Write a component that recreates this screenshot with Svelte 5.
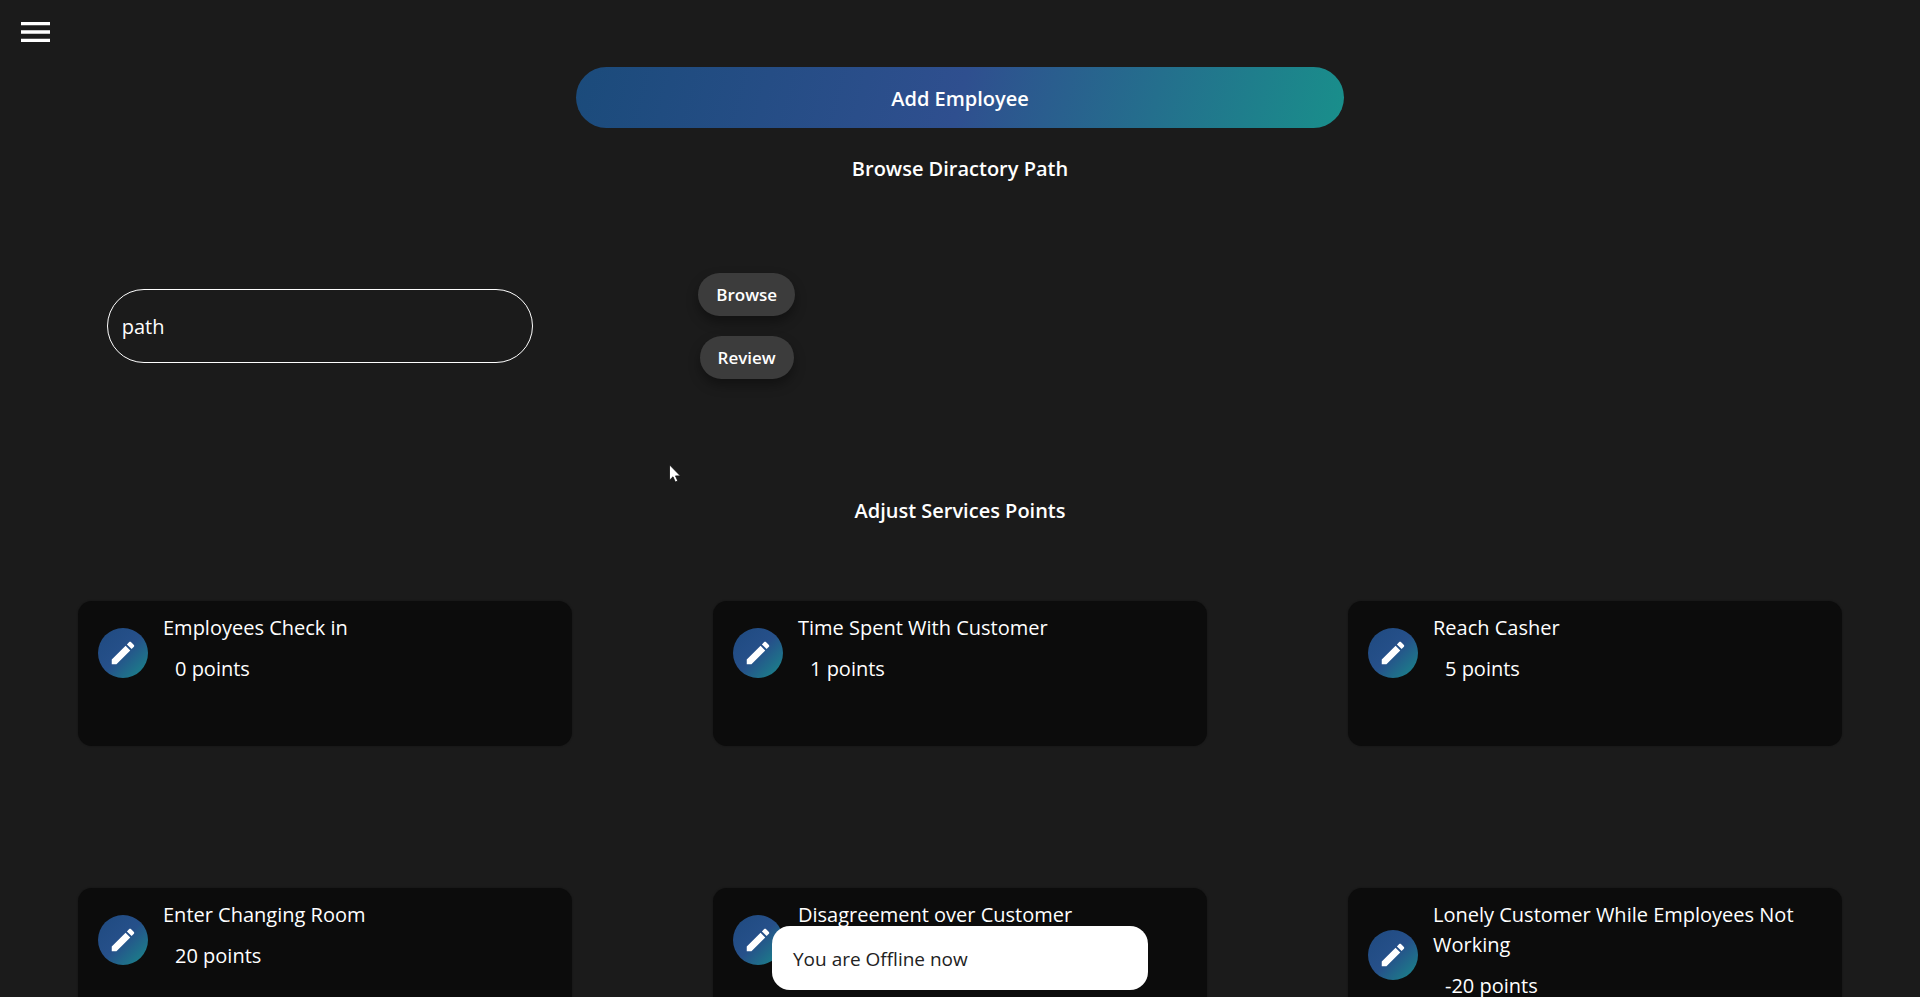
<script>
  const services = [
    { name: 'Employees Check in', points: 0 },
    { name: 'Time Spent With Customer', points: 1 },
    { name: 'Reach Casher', points: 5 },
    { name: 'Enter Changing Room', points: 20 },
    { name: 'Disagreement over Customer', points: null },
    { name: 'Lonely Customer While Employees Not Working', points: -20 },
  ];
  let path = $state('path');
</script>

<div class="page">
  <header>
    <button class="menu" aria-label="Open menu">
      <svg viewBox="0 0 24 24" aria-hidden="true"><path d="M3 18h17.4v-2H3v2zm0-5h17.4v-2H3v2zm0-7v2h17.4V6H3z" /></svg>
    </button>
  </header>

  <main>
    <button class="add">Add Employee</button>

    <h2>Browse Diractory Path</h2>
    <section class="browse">
      <div class="field">
        <input type="text" aria-label="Directory path" bind:value={path} />
      </div>
      <div class="actions">
        <button class="pill">Browse</button>
        <button class="pill">Review</button>
      </div>
    </section>

    <h2 class="adjust">Adjust Services Points</h2>
    <ul class="cards">
      {#each services as service}
        <li class="card">
          <div class="row">
            <button class="edit" aria-label="Edit {service.name}">
              <svg viewBox="0 0 24 24" aria-hidden="true"><path d="M3 17.25V21h3.75L17.81 9.94l-3.75-3.75L3 17.25zM20.71 7.04c.39-.39.39-1.02 0-1.41l-2.34-2.34c-.39-.39-1.02-.39-1.41 0l-1.83 1.83 3.75 3.75 1.83-1.83z" /></svg>
            </button>
            <div class="text">
              <h3>{service.name}</h3>
              <p>{#if service.points !== null}{service.points} points{/if}</p>
            </div>
          </div>
        </li>
      {/each}
    </ul>
  </main>

  <div class="toast" role="status">You are Offline now</div>

  <svg class="cursor" viewBox="0 0 12 19" aria-hidden="true">
    <path d="M.5.8v15.4l3.5-3.4 2.3 5.3 2.5-1.1-2.3-5.1h4.9z" fill="#fff" stroke="#111" stroke-width=".8" />
  </svg>
</div>

<style>
  :global(body) {
    background: #1b1b1b;
  }
  .page {
    height: 100vh;
    overflow: hidden auto;
    scrollbar-width: none;
    background: #1b1b1b;
    color: #fff;
    font: 400 20px/30px 'Open Sans', 'Noto Sans', sans-serif;
  }
  button,
  input {
    font: inherit;
    color: inherit;
    border: 0;
    padding: 0;
    margin: 0;
    background: none;
  }
  button {
    cursor: pointer;
  }
  header {
    display: flex;
    padding: 12px 16px 15px;
  }
  .menu {
    width: 40px;
    height: 40px;
  }
  svg {
    display: block;
    fill: #fff;
  }
  main {
    display: flex;
    flex-direction: column;
    align-items: center;
  }
  .add {
    width: 40%;
    height: 61px;
    padding-top: 2px;
    border-radius: 31px;
    background: linear-gradient(105deg, #1b4b7b, #2f4f8f 50%, #198f8b);
    font-weight: 600;
  }
  h2 {
    margin: 26px 0 0;
    font-size: 20px;
    font-weight: 600;
  }
  .browse {
    display: grid;
    grid-template-columns: 3fr 1fr 5fr;
    align-items: center;
    width: 100%;
    margin-top: 89px;
  }
  .field {
    display: flex;
    justify-content: center;
  }
  input {
    box-sizing: border-box;
    width: calc(100% * 2 / 3);
    height: 74px;
    padding: 0 14px;
    border: 1px solid #fff;
    border-radius: 37px;
  }
  .actions {
    display: flex;
    flex-direction: column;
    align-items: center;
    gap: 20px;
  }
  .pill {
    height: 43px;
    padding: 1px 18px 0;
    border-radius: 22px;
    background: #3c3c3c;
    box-shadow: 0 6px 12px rgba(0, 0, 0, 0.35);
    font-size: 17px;
    font-weight: 600;
  }
  .adjust {
    margin-top: 117px;
  }
  .cards {
    display: grid;
    grid-template-columns: repeat(3, 1fr);
    gap: 142px 141px;
    box-sizing: border-box;
    width: 100%;
    margin: 75px 0 0;
    padding: 0 78px 142px;
    list-style: none;
  }
  .card {
    box-sizing: border-box;
    min-height: 145px;
    padding: 12px 20px 10px;
    border-radius: 14px;
    background: #0c0c0c;
    box-shadow: 0 0 2px rgba(0, 0, 0, 0.4);
  }
  .row {
    display: flex;
    align-items: center;
    gap: 15px;
  }
  .edit {
    display: grid;
    place-items: center;
    flex: none;
    width: 50px;
    height: 50px;
    border-radius: 50%;
    background: linear-gradient(135deg, #1f4a80, #26508a 50%, #198a8a);
  }
  .edit svg {
    width: 30px;
    height: 30px;
  }
  .text {
    padding-bottom: 8px;
  }
  h3,
  p {
    margin: 0;
    font-size: 20px;
    font-weight: 400;
  }
  p {
    min-height: 30px;
    margin-top: 11px;
    padding-left: 12px;
  }
  .toast {
    position: fixed;
    left: 50%;
    bottom: 7px;
    transform: translateX(-50%);
    box-sizing: border-box;
    width: 376px;
    padding: 18px 21px 16px;
    border-radius: 18px;
    background: #fff;
    color: #222;
    font-size: 19px;
  }
  .cursor {
    position: absolute;
    left: 669px;
    top: 464px;
    width: 12px;
    height: 19px;
  }
</style>
